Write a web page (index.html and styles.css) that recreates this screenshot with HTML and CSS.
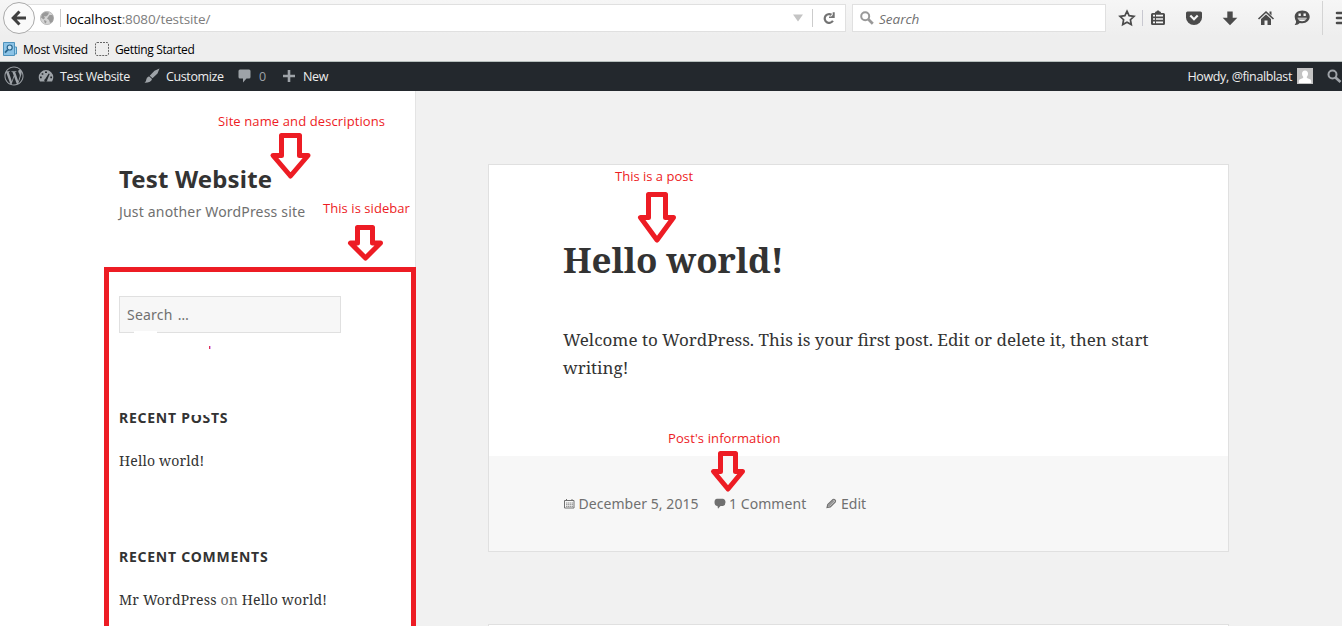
FILE: index.html
```html
<!DOCTYPE html>
<html lang="en">
<head>
<meta charset="utf-8">
<title>Test Website</title>
<link rel="stylesheet" href="styles.css">
</head>
<body>
<div class="window">
  <header class="browser">
    <div class="nav-row">
      <div class="back"><svg width="16" height="16" viewBox="0 0 16 16"><path d="M8.500 1.500 2.200 8l6.300 6.500M2.500 8H15" fill="none" stroke="#404040" stroke-width="3"/></svg></div>
      <div class="url-bar">
        <svg class="globe" width="14" height="14" viewBox="0 0 14 14"><circle cx="7" cy="7" r="6.600" fill="#d4d4d4" stroke="#b4b4b4" stroke-width=".8"/><path d="M2 3 5 1l4 .5L8 4 6 5.500 4 5 5 7 3.500 8.500 1 6.500zM9.500 4l3 0 1 3-1 4-2.500 1L9 9 7 7.500zM4 9l2.500 1L6 12.500 4.500 11.500z" fill="#999"/></svg>
        <span class="divider"></span>
        <span class="url"><b>localhost</b>:8080/testsite/</span>
        <svg class="caret" width="10" height="8" viewBox="0 0 10 8"><path d="M0 .5h10L5 7.500z" fill="#c4c4c4"/></svg>
        <span class="divider reload-line"></span>
        <svg class="reload" width="12" height="12" viewBox="0 0 12 12"><path d="M9.900 8.800A4.400 4.400 0 1 1 8.500 2.800" fill="none" stroke="#737373" stroke-width="2.200"/><path d="M11.700.2V6H6V4.600h2.200L9.700 3V.2z" fill="#737373"/></svg>
      </div>
      <div class="search-bar">
        <svg width="14" height="14" viewBox="0 0 14 14"><circle cx="5.200" cy="5.200" r="4" fill="none" stroke="#999" stroke-width="2"/><path d="m8.300 8.300 4.500 4.500" stroke="#999" stroke-width="2.700"/></svg>
        <span>Search</span>
      </div>
      <div class="tools">
        <svg width="18" height="18" viewBox="0 0 18 18"><path d="m9 2.200 2.100 4.500 4.900.6-3.600 3.400.9 4.900L9 13.200l-4.300 2.400.9-4.900L2 7.300l4.900-.6z" fill="none" stroke="#4b4b4b" stroke-width="1.700"/></svg>
        <span class="tool-line"></span>
        <svg width="18" height="18" viewBox="0 0 18 18"><path d="M3.500 4H6c0-1 .5-1.500 1.500-1.500C7.500 1 10.500 1 10.500 2.500 11.500 2.500 12 3 12 4h2.500q1.500 0 1.500 1.500v9q0 1.500-1.500 1.500h-11Q2 16 2 14.500v-9Q2 4 3.500 4z" fill="#4b4b4b"/><path d="M4 6.700h2M7 6.700h7M4 10h2M7 10h7M4 13.300h2M7 13.300h7" stroke="#f5f5f5" stroke-width="1.700"/></svg>
        <svg width="18" height="18" viewBox="0 0 18 18"><path d="M2.500 2.500h13q1.500 0 1.500 1.500v4.500a8 7.500 0 0 1-16 0V4q0-1.500 1.500-1.500z" fill="#4b4b4b"/><path d="m5.300 6.500 3.700 3.700 3.700-3.700" fill="none" stroke="#f5f5f5" stroke-width="2.200"/></svg>
        <svg width="18" height="18" viewBox="0 0 18 18"><path d="M6.300 2.500h5.400v6.200h4.600L9 16.200 1.700 8.700h4.600z" fill="#4b4b4b"/></svg>
        <svg width="18" height="18" viewBox="0 0 18 18"><path d="M1.500 10 9 3l7.500 7" fill="none" stroke="#4b4b4b" stroke-width="1.600"/><path d="M12.500 2.500h2v4l-2-2zM9 5.500l5 4.600V16h-3.500v-4.500h-3V16H4v-5.900z" fill="#4b4b4b"/></svg>
        <svg width="18" height="18" viewBox="0 0 18 18"><path d="M9.300 1.500c4.500 0 7.400 2.800 7.400 6.300s-3 6.400-7.400 6.400q-1.400 0-2.500-.3Q5 16.300 1.700 16q1.500-1.600 1.400-3.800Q1.700 10.500 1.700 7.800c0-3.500 3-6.300 7.600-6.300z" fill="#4b4b4b"/><path d="M5.500 4.500h2.300v2.500H5.500zM10.500 4.500h2.300v2.500h-2.300zM4.500 8.700h9.300q-1 3.600-4.700 3.600T4.500 8.700z" fill="#f5f5f5"/><path d="M5 10h8" stroke="#4b4b4b" stroke-width=".7"/></svg>
        <span class="menu"><svg width="18" height="18" viewBox="0 0 18 18"><path d="M3 4h14M3 9h14M3 14h14" stroke="#4b4b4b" stroke-width="2.600" stroke-linecap="round"/></svg></span>
      </div>
    </div>
    <div class="bookmarks">
      <svg width="14" height="16" viewBox="0 0 14 16"><path d="M10 6h3.500v7H10z" fill="#a8d4ee" stroke="#4d94bd"/><path d="M.5 1.500h11v13H.5z" fill="#8cc3e6" stroke="#4e93bd"/><circle cx="6.700" cy="6.500" r="2.500" fill="#c7e4f5" stroke="#28658d" stroke-width="1.200"/><path d="m4.800 8.600-2.800 3" stroke="#28658d" stroke-width="1.700"/></svg>
      <span class="bm-visited">Most Visited</span>
      <svg width="14" height="14" viewBox="0 0 14 14"><rect x=".5" y=".5" width="13" height="13" rx="1.500" fill="none" stroke="#666" stroke-dasharray="2 1"/></svg>
      <span class="bm-start">Getting Started</span>
    </div>
  </header>

  <nav class="admin">
    <svg class="wp" width="20" height="20" viewBox="-.6 -.6 25.200 25.200"><path fill="#9ea3a8" d="M21.469 6.825c.84 1.537 1.318 3.300 1.318 5.175 0 3.979-2.156 7.456-5.363 9.325l3.295-9.527c.615-1.540.820-2.771.820-3.864 0-.405-.026-.780-.070-1.110m-7.981.105c.647-.030 1.232-.105 1.232-.105.582-.075.514-.930-.067-.899 0 0-1.755.135-2.880.135-1.064 0-2.850-.150-2.850-.150-.585-.030-.661.855-.075.885 0 0 .540.061 1.125.090l1.680 4.605-2.370 7.080L5.354 6.900c.649-.030 1.234-.100 1.234-.100.585-.075.516-.930-.065-.896 0 0-1.746.138-2.874.138-.200 0-.438-.008-.690-.015C4.911 3.150 8.235 1.215 12 1.215c2.809 0 5.365 1.072 7.286 2.833-.046-.003-.091-.009-.141-.009-1.060 0-1.812.923-1.812 1.914 0 .890.513 1.643 1.060 2.531.411.720.890 1.643.890 2.977 0 .915-.354 1.994-.821 3.479l-1.075 3.585-3.900-11.610.001.014zM12 22.784c-1.059 0-2.081-.153-3.048-.437l3.237-9.406 3.315 9.087c.024.053.050.101.078.149-1.120.393-2.325.609-3.582.609M1.211 12c0-1.564.336-3.050.935-4.390L7.290 21.709C3.694 19.960 1.212 16.271 1.211 12M12 0C5.385 0 0 5.385 0 12s5.385 12 12 12 12-5.385 12-12S18.615 0 12 0"/></svg>
    <svg class="dash" width="16" height="14" viewBox="0 0 16 14"><path d="M8 1a7.300 7.300 0 0 1 7.300 7.300q0 2.300-1.200 4.200H1.900Q.7 10.600.7 8.300A7.300 7.300 0 0 1 8 1z" fill="#9ea3a8"/><path d="M7 2.500h2v1.600H7zM3.700 4.200h1.600v1.600H3.700zM2 7.600h1.700v1.600H2zM12.300 7.600H14v1.600h-1.700zM10.700 4.500l1 .5-2.500 6a1.500 1.500 0 1 1-2-1z" fill="#23282d"/></svg>
    <span class="ab-site">Test Website</span>
    <svg class="brush" width="16" height="16" viewBox="0 0 16 16"><path d="m15.500.5-2 5-5 4.800-2.800-2.600 4.800-5zM5 8.200l3 2.700q-.5 3.600-7.500 3.800 1.800-1.200 1.800-3.200T5 8.200z" fill="#9ea3a8"/></svg>
    <span class="ab-custom">Customize</span>
    <svg class="bubble" width="14" height="14" viewBox="0 0 14 14"><path d="M2 .5h9q1.500 0 1.500 1.500v6q0 1.500-1.500 1.500H8.500L5 13.500v-4H2Q.5 9.500.5 8V2Q.5.5 2 .5z" fill="#9ea3a8"/></svg>
    <span class="ab-count">0</span>
    <svg class="plus" width="12" height="12" viewBox="0 0 12 12"><path d="M6 0v12M0 6h12" stroke="#9ea3a8" stroke-width="2.600"/></svg>
    <span class="ab-new">New</span>
    <span class="howdy">Howdy, @finalblast</span>
    <svg class="avatar" width="16" height="16" viewBox="0 0 16 16"><path d="M0 0h16v16H0z" fill="#c3c3c3"/><path d="M8 2.500c2 0 3 1.400 3 3.200 0 1.400-.5 2.500-1.300 3.200l.3 1 3.500 1.600q.8.700.8 3.500H1.700q0-2.800.8-3.500L6 9.900l.3-1Q5 7.700 5 5.700c0-1.800 1-3.200 3-3.200z" fill="#fff"/></svg>
    <svg class="ab-search" width="15" height="15" viewBox="0 0 15 15"><circle cx="5.500" cy="5.500" r="4" fill="none" stroke="#9ea3a8" stroke-width="2"/><path d="m8.500 8.500 5 4.500" stroke="#9ea3a8" stroke-width="2.700"/></svg>
  </nav>

  <div class="page">
    <aside class="sidebar">
      <h1 class="site-title">Test Website</h1>
      <p class="tagline">Just another WordPress site</p>
      <div class="widgets">
        <div class="search-field">Search …<span class="nick"></span></div>
        <h2 class="widget-title posts">RECENT POSTS<span class="smudge"></span></h2>
        <p class="entry">Hello world!</p>
        <h2 class="widget-title comments">RECENT COMMENTS</h2>
        <p class="entry">Mr WordPress <i>on</i> Hello world!</p>
      </div>
    </aside>
    <main class="main">
      <article class="post">
        <div class="post-body">
          <h2 class="post-title">Hello world!</h2>
          <p class="post-text">Welcome to WordPress. This is your first post. Edit or delete it, then start<br>writing!</p>
        </div>
        <footer class="post-meta">
          <svg class="m-cal" width="12" height="10" viewBox="0 0 12 10"><path d="M1.500 1.500h9.500v7.500H1.500zM3.500 0v2M9 0v2" fill="none" stroke="#707070"/><path d="M3 4h7M3 5.700h7M3 7.400h7" stroke="#808080" stroke-dasharray="1.500 .5" stroke-width=".9"/></svg>
          <span class="m-date">December 5, 2015</span>
          <svg class="m-bubble" width="12" height="11" viewBox="0 0 12 11"><path d="M3 .8h6q2.500.5 2.500 3.500T9 8.100H6.500L4 10.700l-.5-2.600Q.5 7.800.5 4.300T3 .8z" fill="#707070"/></svg>
          <span class="m-comment">1 Comment</span>
          <svg class="m-pencil" width="11" height="11" viewBox="0 0 11 11"><path d="m1 9.500.7-3L7 1.500q1-.6 2 .3t.4 2L4.300 8.900z" fill="#c4c4c4" stroke="#707070" stroke-width="1.100"/><path d="m2.500 8 5.300-5.300" stroke="#707070"/></svg>
          <span class="m-edit">Edit</span>
        </footer>
      </article>
      <article class="post next"></article>
    </main>
  </div>

  <div class="notes">
    <div class="frame"></div>
    <span class="tick"></span>
    <span class="note n1">Site name and descriptions</span>
    <span class="note n2">This is sidebar</span>
    <span class="note n3">This is a post</span>
    <span class="note n4">Post's information</span>
    <svg class="arrows" width="1342" height="626" viewBox="0 0 1342 626" fill="none" stroke="#ed1c24" stroke-width="5" stroke-linejoin="round">
      <path d="M281.500 135.500h18v20h8.500L290.500 176 273 155.500h8.500z"/>
      <path d="M357.500 227.500h15V243h8l-15 15-15-15h7z"/>
      <path d="M648.500 194.500h17v23h8L657 240l-16.500-22.500h8z"/>
      <path d="M720.500 453.500h15v18h7L728 489l-14.500-17.500h7z"/>
    </svg>
  </div>
</div>
</body>
</html>
```
FILE: styles.css
```css
* { box-sizing: border-box; }
body { margin: 0; font-family: "Noto Sans", sans-serif; color: #333; }
h1, h2, p { margin: 0; }
svg { display: block; flex: none; }
span { white-space: nowrap; }
.window { position: relative; width: 1342px; height: 626px; overflow: hidden; display: flex; flex-direction: column; }

.browser { height: 62px; flex: none; background: linear-gradient(#f6f6f6, #eee 60%); border-bottom: 1px solid #b6bfbd; font-family: "Open Sans", sans-serif; }
.nav-row { height: 36px; display: flex; align-items: flex-start; padding-top: 4px; }
.nav-row > * { flex: none; }
.back { width: 32px; height: 32px; margin: -2px 0 0 3px; border: 1px solid #aaa; border-radius: 50%; background: #fafafa; display: flex; align-items: center; justify-content: center; z-index: 1; }
.url-bar { width: 829px; height: 28px; margin-left: -18px; padding-left: 22px; border: 1px solid #e0e0e0; background: #fff; display: flex; align-items: center; }
.divider { width: 1px; height: 18px; margin-left: 6px; background: #ccc; }
.url { width: 727px; margin-left: 5px; padding-top: 1px; font-size: 13.500px; letter-spacing: -.1px; color: #7d7d7d; }
.url b { font-weight: 400; color: #000; }
.reload-line { margin-left: 9px; }
.reload { margin-left: 10px; }
.search-bar { width: 254px; height: 28px; margin-left: 6px; padding-left: 7px; border: 1px solid #e0e0e0; background: #fff; display: flex; align-items: center; gap: 5px; font-size: 13.500px; font-style: italic; color: #707070; }
.search-bar span { padding-top: 1px; }
.tools { display: flex; align-items: center; height: 28px; gap: 18px; margin-left: 12px; }
.tool-line { width: 1px; height: 16px; margin: 0 -12px 0 -12px; background: #c8c8d0; }
.menu { height: 34px; border-left: 1px solid #d4d4d4; padding: 8px 0 0 11px; margin-left: -7px; }
.bookmarks { display: flex; align-items: center; height: 25px; padding-left: 3px; font-size: 12px; color: #000; }
.bm-visited { margin-left: 6px; width: 72px; padding-top: 2px; letter-spacing: -.3px; }
.bm-start { margin-left: 6px; padding-top: 2px; letter-spacing: -.36px; }

.admin { height: 29px; flex: none; background: #23282d; color: #eee; display: flex; align-items: center; padding-left: 4px; font-family: "Open Sans", sans-serif; font-size: 12.500px; letter-spacing: -.38px; }
.admin span { padding-bottom: 1px; }
.admin svg { margin-bottom: 1px; }
.admin .dash { margin-left: 14px; }
.ab-site { margin-left: 6px; width: 84px; }
.ab-custom { margin-left: 6px; width: 72px; }
.ab-count { margin-left: 7px; width: 24px; color: #9ea3a8; }
.ab-new { margin-left: 8px; }
.howdy { margin-left: auto; }
.admin .avatar { margin: 0 14px 1px 5px; }

.page { flex: 1; display: flex; background: #f1f1f1; }
.sidebar { width: 416px; padding: 70px 0 0 119px; background: #fff; border-right: 1px solid #e4e4e4; }
.site-title { font-size: 24px; line-height: 36px; letter-spacing: .15px; }
.tagline { margin-top: 4px; font-size: 14px; line-height: 22px; letter-spacing: .18px; color: #707070; }
.widgets { padding-top: 73px; }
.search-field { position: relative; width: 222px; height: 37px; border: 1px solid #e0e0e0; background: #f7f7f7; padding-left: 7px; font-size: 14px; line-height: 35px; letter-spacing: .2px; word-spacing: 1.500px; color: #707070; }
.nick { position: absolute; left: 14px; bottom: -1px; width: 23px; height: 2px; background: #fff; }
.widget-title { position: relative; font-size: 14px; line-height: 20px; letter-spacing: .75px; }
.posts { margin-top: 75px; }
.smudge { position: absolute; left: 71px; top: 2px; width: 20px; height: 5px; background: #fff; }
.entry { margin-top: 23px; font: 14px/20px "Noto Serif", "Droid Serif", "DejaVu Serif", serif; letter-spacing: .17px; white-space: nowrap; }
.entry i { font-style: normal; color: #707070; }
.comments { margin-top: 76px; }

.main { padding: 73px 0 0 72px; }
.post { width: 741px; background: #fff; border: 1px solid #e0e0e0; }
.post-body { height: 291px; padding: 70px 0 0 74px; }
.post-title { font: bold 35px/50px "Noto Serif", "Droid Serif", "DejaVu Serif", serif; letter-spacing: -.1px; }
.post-text { margin-top: 41px; font: 17px/28px "Noto Serif", "Droid Serif", "DejaVu Serif", serif; white-space: nowrap; }
.post-meta { height: 95px; background: #f7f7f7; padding-left: 74px; display: flex; align-items: center; font-size: 14px; color: #707070; }
.m-date { margin-left: 3.500px; width: 121px; letter-spacing: .06px; }
.m-bubble { margin-left: 14.500px; }
.m-comment { margin-left: 3px; width: 80px; letter-spacing: .06px; }
.m-pencil { margin-left: 17px; }
.m-edit { margin-left: 4px; }
.next { margin-top: 72px; height: 40px; }

.notes { position: absolute; inset: 0; }
.frame { position: absolute; left: 104px; top: 267px; width: 312px; height: 370px; border: 5px solid #ed1c24; }
.tick { position: absolute; left: 209px; top: 346px; width: 2px; height: 3px; background: linear-gradient(90deg, #e0305a 50%, #e0b0f0 50%); }
.note { position: absolute; font: 13px/18px "Open Sans", sans-serif; letter-spacing: .11px; color: #ed1c24; }
.n1 { left: 218px; top: 112px; }
.n2 { left: 323px; top: 199px; letter-spacing: .06px; }
.n3 { left: 615px; top: 167px; letter-spacing: 0; }
.n4 { left: 668px; top: 429px; }
.arrows { position: absolute; left: 0; top: 0; }
```
